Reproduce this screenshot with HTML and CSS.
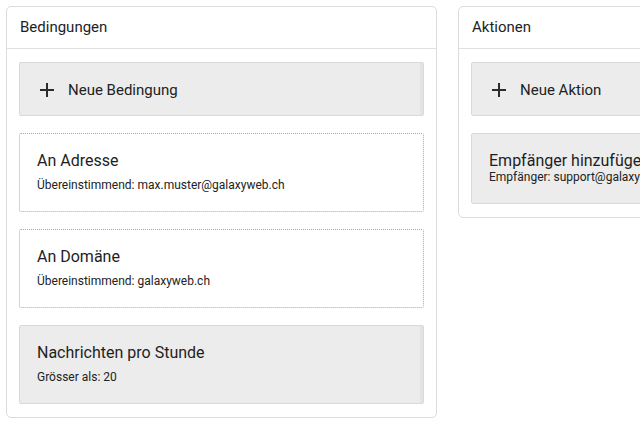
FILE: index.html
```html
<!DOCTYPE html>
<html lang="de">
<head>
<meta charset="utf-8">
<link rel="stylesheet" href="styles.css">
</head>
<body>
<div class="columns">
  <section class="panel">
    <header class="panel-head">Bedingungen</header>
    <div class="panel-body">
      <div class="add-btn">
        <svg class="plus" width="14" height="14" viewBox="0 0 14 14"><path d="M7 0v14M0 7h14" stroke="#2b2b2b" stroke-width="2"/></svg>
        <span>Neue Bedingung</span>
      </div>
      <div class="card dashed">
        <div class="card-title">An Adresse</div>
        <div class="card-sub">Übereinstimmend: max.muster@galaxyweb.ch</div>
      </div>
      <div class="card dashed">
        <div class="card-title">An Domäne</div>
        <div class="card-sub">Übereinstimmend: galaxyweb.ch</div>
      </div>
      <div class="card filled">
        <div class="card-title">Nachrichten pro Stunde</div>
        <div class="card-sub">Grösser als: 20</div>
      </div>
    </div>
  </section>
  <section class="panel">
    <header class="panel-head">Aktionen</header>
    <div class="panel-body">
      <div class="add-btn">
        <svg class="plus" width="14" height="14" viewBox="0 0 14 14"><path d="M7 0v14M0 7h14" stroke="#2b2b2b" stroke-width="2"/></svg>
        <span>Neue Aktion</span>
      </div>
      <div class="card filled compact">
        <div class="card-title">Empfänger hinzufügen</div>
        <div class="card-sub">Empfänger: support@galaxyweb.ch</div>
      </div>
    </div>
  </section>
</div>
</body>
</html>
```
FILE: styles.css
```css
html, body {
  margin: 0;
  padding: 0;
  background: #ffffff;
  overflow: hidden;
}
body {
  font-family: Roboto, "Liberation Sans", sans-serif;
  color: #222;
  width: 640px;
  height: 425px;
}
.columns {
  display: flex;
  align-items: flex-start;
  gap: 21px;
  padding: 6px 0 0 6px;
  width: 1000px;
}
.panel {
  flex: 0 0 431px;
  box-sizing: border-box;
  border: 1px solid #dcdcdc;
  border-radius: 5px;
  background: #fff;
}
.panel-head {
  height: 41px;
  line-height: 41px;
  padding: 0 13px;
  font-size: 15px;
  color: #1e1e1e;
  border-bottom: 1px solid #e0e0e0;
}
.panel-body {
  padding: 13px 12px;
  display: flex;
  flex-direction: column;
  gap: 17px;
}
.add-btn {
  box-sizing: border-box;
  height: 54px;
  display: flex;
  align-items: center;
  padding: 2px 0 0 20px;
  background: #ececec;
  border: 1px solid #d9d9d9;
  border-radius: 2px;
  box-shadow: inset -3px 0 0 #e3e3e3;
  font-size: 15px;
  color: #222;
}
.plus {
  margin-right: 14px;
}
.card {
  box-sizing: border-box;
  height: 79px;
  padding: 17px 17px 0;
  border-radius: 2px;
}
.dashed {
  border: 1px dotted #a8a8a8;
  background: #fff;
}
.filled {
  background: #ececec;
  border: 1px solid #d9d9d9;
  box-shadow: inset -3px 0 0 #e3e3e3;
}
.card-title {
  font-size: 16px;
  line-height: 20px;
  color: #1e1e1e;
  white-space: nowrap;
}
.card-sub {
  margin-top: 6px;
  font-size: 12px;
  line-height: 16px;
  color: #222;
  white-space: nowrap;
}
.compact {
  height: 71px;
}
.compact .card-sub {
  margin-top: 0;
  line-height: 13px;
}
```
